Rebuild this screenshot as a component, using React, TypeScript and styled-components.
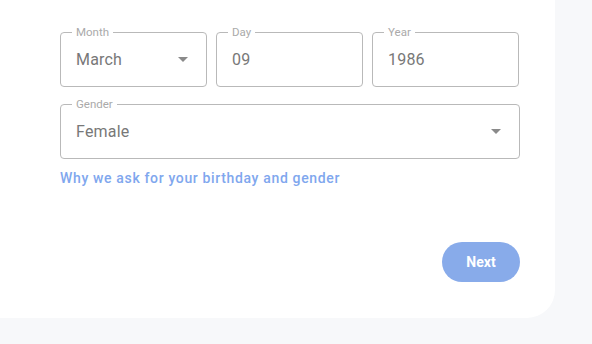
import React from "react";
import styled, { createGlobalStyle } from "styled-components";

const GlobalStyle = createGlobalStyle`
  html, body {
    margin: 0;
    padding: 0;
    background: #f7f8fa;
    font-family: Roboto, "Liberation Sans", sans-serif;
  }
`;

const Page = styled.div`
  width: 592px;
  height: 344px;
  overflow: hidden;
`;

const Card = styled.div`
  width: 555px;
  height: 318px;
  background: #ffffff;
  border-bottom-right-radius: 28px;
  box-sizing: border-box;
  padding: 32px 35px 0 60px;
  display: flex;
  flex-direction: column;
`;

const Row = styled.div<{ $gap?: number }>`
  display: flex;
  gap: 9px;
  margin-top: ${({ $gap }) => $gap ?? 0}px;
`;

const Field = styled.div<{ $w?: number }>`
  position: relative;
  box-sizing: border-box;
  width: ${({ $w }) => ($w ? `${$w}px` : "100%")};
  height: 55px;
  border: 1px solid #b9b9b9;
  border-radius: 4px;
  display: flex;
  align-items: center;
  padding: 0 18px 0 15px;
`;

const Label = styled.span`
  position: absolute;
  top: -8px;
  left: 11px;
  padding: 0 4px;
  background: #ffffff;
  font-size: 11.5px;
  line-height: 14px;
  color: #aaaaaa;
`;

const Value = styled.span`
  flex: 1;
  font-size: 16px;
  color: #787878;
  letter-spacing: 0.2px;
`;

const Caret = styled.span`
  width: 0;
  height: 0;
  border-left: 5px solid transparent;
  border-right: 5px solid transparent;
  border-top: 5px solid #8a8a8a;
`;

const HelpLink = styled.a`
  margin-top: 11px;
  font-size: 14px;
  font-weight: 500;
  letter-spacing: 0.65px;
  color: #80a7ee;
  text-decoration: none;
  line-height: 16px;
`;

const Actions = styled.div`
  display: flex;
  justify-content: flex-end;
  margin-top: 56px;
`;

const NextButton = styled.button`
  width: 78px;
  height: 40px;
  border: none;
  border-radius: 20px;
  background: #88abea;
  color: #ffffff;
  font-family: Roboto, "Liberation Sans", sans-serif;
  font-size: 14px;
  font-weight: 700;
  cursor: pointer;
`;

export default function App() {
  return (
    <Page>
      <GlobalStyle />
      <Card>
        <Row>
          <Field $w={147}>
            <Label>Month</Label>
            <Value>March</Value>
            <Caret />
          </Field>
          <Field $w={147}>
            <Label>Day</Label>
            <Value>09</Value>
          </Field>
          <Field $w={147}>
            <Label>Year</Label>
            <Value>1986</Value>
          </Field>
        </Row>
        <Row $gap={17}>
          <Field>
            <Label>Gender</Label>
            <Value>Female</Value>
            <Caret />
          </Field>
        </Row>
        <HelpLink href="#">Why we ask for your birthday and gender</HelpLink>
        <Actions>
          <NextButton>Next</NextButton>
        </Actions>
      </Card>
    </Page>
  );
}
